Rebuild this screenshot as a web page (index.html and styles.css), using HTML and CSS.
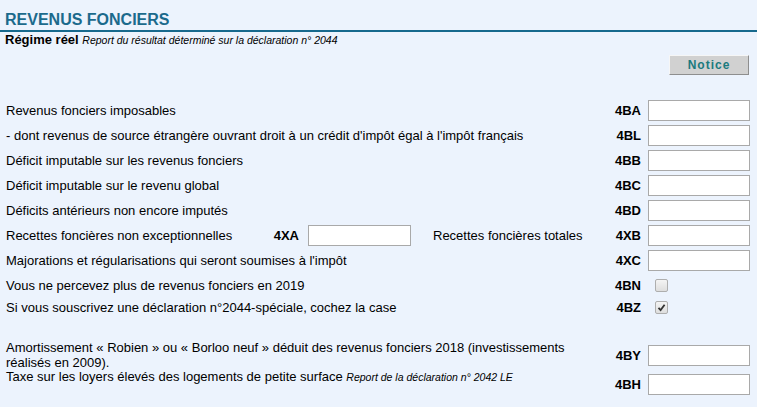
FILE: index.html
```html
<!DOCTYPE html>
<html lang="fr">
<head>
<meta charset="utf-8">
<title>Revenus fonciers</title>
<link rel="stylesheet" href="styles.css">
</head>
<body>
<div class="page">
  <h1 class="title">REVENUS FONCIERS</h1>
  <div class="subtitle"><b>Régime réel</b> <i class="note">Report du résultat déterminé sur la déclaration n° 2044</i></div>
  <div class="toolbar"><button class="notice" type="button">Notice</button></div>

  <div class="row first">
    <span class="label">Revenus fonciers imposables</span>
    <span class="code">4BA</span><input class="field" type="text">
  </div>
  <div class="row">
    <span class="label">- dont revenus de source étrangère ouvrant droit à un crédit d'impôt égal à l'impôt français</span>
    <span class="code">4BL</span><input class="field" type="text">
  </div>
  <div class="row">
    <span class="label">Déficit imputable sur les revenus fonciers</span>
    <span class="code">4BB</span><input class="field" type="text">
  </div>
  <div class="row">
    <span class="label">Déficit imputable sur le revenu global</span>
    <span class="code">4BC</span><input class="field" type="text">
  </div>
  <div class="row">
    <span class="label">Déficits antérieurs non encore imputés</span>
    <span class="code">4BD</span><input class="field" type="text">
  </div>
  <div class="row">
    <span class="label fixed">Recettes foncières non exceptionnelles</span>
    <span class="code wide">4XA</span><input class="field mid" type="text">
    <span class="label second">Recettes foncières totales</span>
    <span class="code">4XB</span><input class="field" type="text">
  </div>
  <div class="row">
    <span class="label">Majorations et régularisations qui seront soumises à l'impôt</span>
    <span class="code">4XC</span><input class="field" type="text">
  </div>
  <div class="row check first-check">
    <span class="label">Vous ne percevez plus de revenus fonciers en 2019</span>
    <span class="code">4BN</span><span class="box"></span>
  </div>
  <div class="row check">
    <span class="label">Si vous souscrivez une déclaration n°2044-spéciale, cochez la case</span>
    <span class="code">4BZ</span><span class="box checked"><svg viewBox="0 0 11 11" width="11" height="11"><path d="M2.5 5.8 L4.6 8 L8.6 2.8" fill="none" stroke="#333" stroke-width="1.8"/></svg></span>
  </div>
  <div class="row tall">
    <span class="label">Amortissement « Robien » ou « Borloo neuf » déduit des revenus fonciers 2018 (investissements réalisés en 2009).</span>
    <span class="code">4BY</span><input class="field" type="text">
  </div>
  <div class="row top">
    <span class="label">Taxe sur les loyers élevés des logements de petite surface <i class="note">Report de la déclaration n° 2042 LE</i></span>
    <span class="code">4BH</span><input class="field" type="text">
  </div>
</div>
</body>
</html>
```

FILE: styles.css
```css
html, body {
  margin: 0;
  padding: 0;
  background: #ecf3fd;
}
body {
  font-family: "Liberation Sans", Arial, sans-serif;
  font-size: 13px;
  line-height: 15px;
  color: #000;
}
.page {
  display: flex;
  flex-direction: column;
}
.title {
  margin: 0;
  padding: 11px 5px 1px;
  font-size: 16px;
  line-height: 18px;
  font-weight: bold;
  color: #1b6a8c;
  border-bottom: 2px solid #16698d;
}
.subtitle {
  padding-left: 5px;
  line-height: 15px;
}
.note {
  font-size: 10.5px;
}
.toolbar {
  display: flex;
  justify-content: flex-end;
  padding-right: 8px;
  margin-top: 7px;
}
.notice {
  width: 80px;
  height: 20px;
  padding: 0;
  margin: 0;
  font-family: "Liberation Sans", Arial, sans-serif;
  font-size: 12px;
  font-weight: bold;
  letter-spacing: 1px;
  color: #1b7a7e;
  background: #d1d1d1;
  border: 1px solid;
  border-color: #f6f6f6 #8e8e8e #8e8e8e #f6f6f6;
}
.row {
  display: flex;
  align-items: center;
  margin-top: 4px;
  padding-left: 6px;
  padding-right: 7px;
}
.row.first {
  margin-top: 25px;
}
.label {
  flex: 1 1 0;
  min-width: 0;
}
.label.fixed {
  flex: none;
  width: 240px;
}
.label.second {
  margin-left: 22px;
}
.code {
  flex: none;
  width: 40px;
  margin-right: 7px;
  text-align: right;
  font-weight: bold;
}
.code.wide {
  width: 53px;
  margin-right: 9px;
}
.field {
  box-sizing: border-box;
  flex: none;
  width: 102px;
  min-width: 0;
  height: 21px;
  margin: 0;
  padding: 1px 3px;
  border: 1px solid #a9a9a9;
  background: #fff;
  font-family: "Liberation Sans", Arial, sans-serif;
  font-size: 13px;
}
.field.mid {
  width: 103px;
}
.row.check {
  height: 18px;
}
.row.first-check {
  margin-top: 5px;
}
.row.check .code {
  margin-right: 14px;
}
.box {
  box-sizing: border-box;
  flex: none;
  width: 13px;
  height: 13px;
  border: 1px solid #aeaeae;
  border-radius: 2px;
  background: linear-gradient(#f4f4f4, #dedede);
  display: flex;
  align-items: center;
  justify-content: center;
  margin-right: 82px;
}
.box svg {
  display: block;
}
.row.tall {
  margin-top: 24px;
}
.row.tall .label {
  padding-right: 14px;
}
.row.top {
  align-items: flex-start;
}
.row.top .label {
  margin-top: -5px;
}
.row.top .code {
  line-height: 21px;
}
```
